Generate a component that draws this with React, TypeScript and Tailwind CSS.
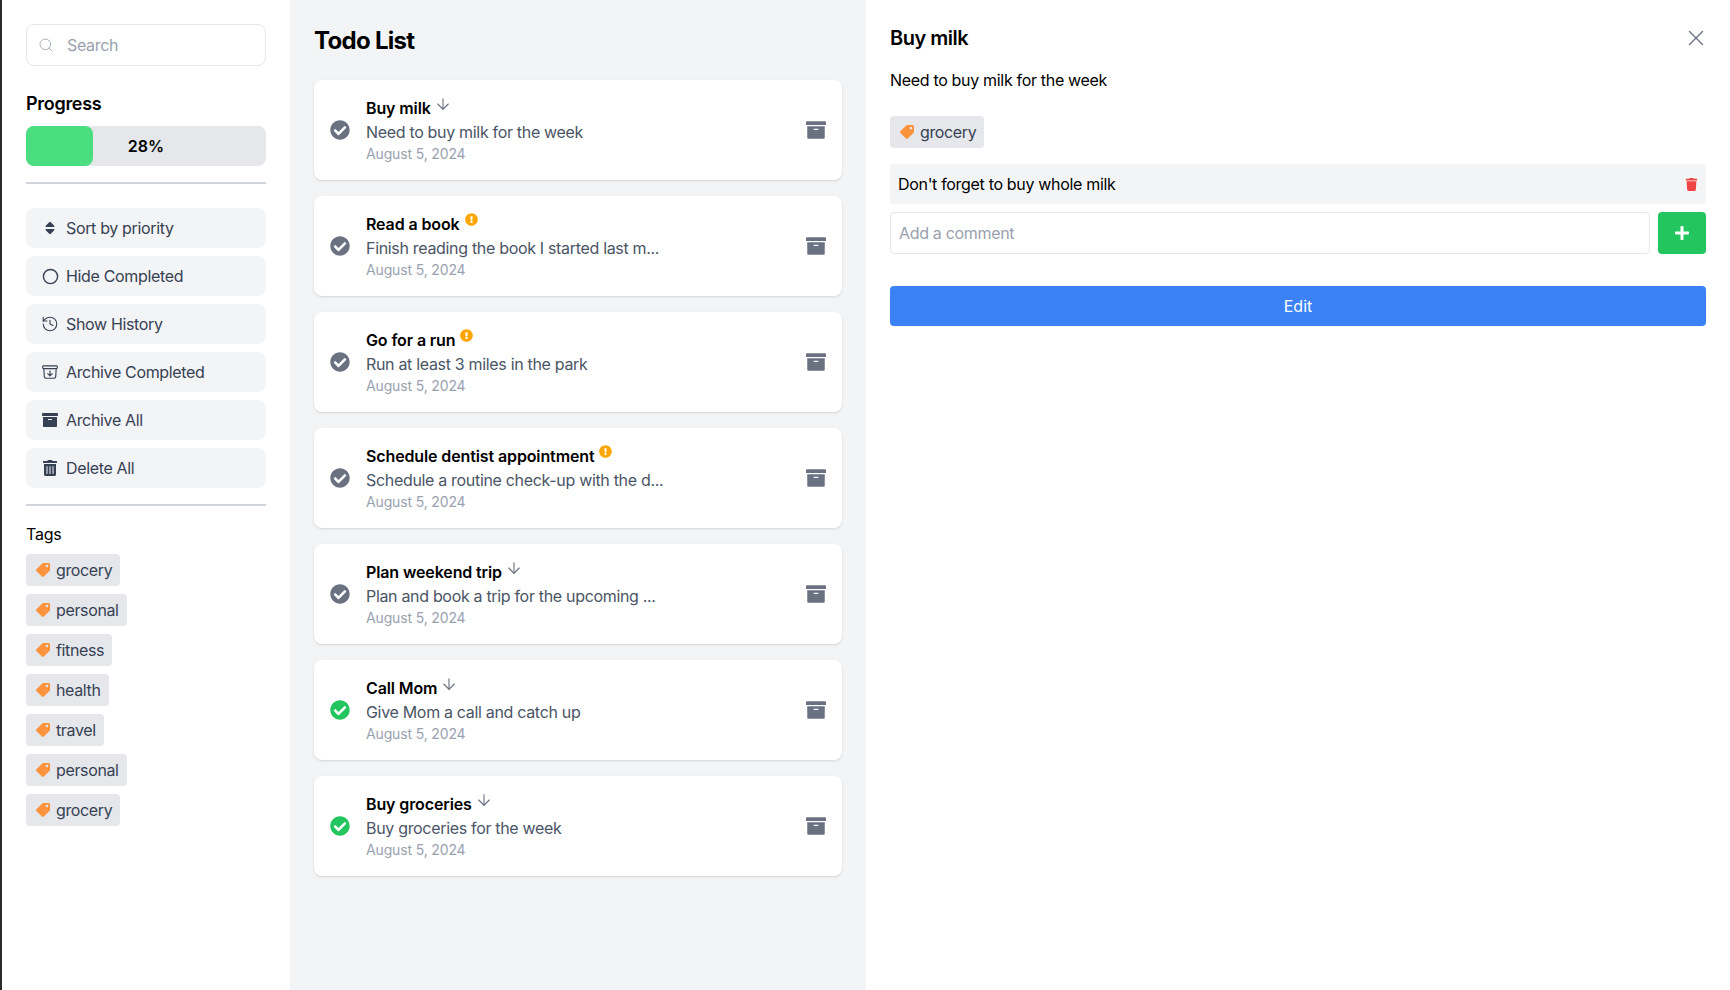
import React from 'react';
import { ArrowDown, Circle, History, Search, X } from 'lucide-react';
import { FaArchive, FaCheckCircle, FaExclamationCircle, FaPlus, FaSort, FaTag, FaTrash, FaTrashAlt } from 'react-icons/fa';
import { HiOutlineArchiveBoxArrowDown } from 'react-icons/hi2';

const tags = ['grocery', 'personal', 'fitness', 'health', 'travel', 'personal', 'grocery'];

const todos = [
  { title: 'Buy milk', desc: 'Need to buy milk for the week', flag: 'low', done: false },
  { title: 'Read a book', desc: 'Finish reading the book I started last m...', flag: 'high', done: false },
  { title: 'Go for a run', desc: 'Run at least 3 miles in the park', flag: 'high', done: false },
  { title: 'Schedule dentist appointment', desc: 'Schedule a routine check-up with the d...', flag: 'high', done: false },
  { title: 'Plan weekend trip', desc: 'Plan and book a trip for the upcoming ...', flag: 'low', done: false },
  { title: 'Call Mom', desc: 'Give Mom a call and catch up', flag: 'low', done: true },
  { title: 'Buy groceries', desc: 'Buy groceries for the week', flag: 'low', done: true },
];

function TagChip({ name }: { name: string }) {
  return (
    <div className="flex h-8 w-fit items-center rounded bg-gray-200 pl-2.5 pr-2 tracking-[-0.36px] text-gray-700">
      <FaTag size={14} className="mr-1.5 -scale-x-100 text-[#fb923c]" />
      <span>{name}</span>
    </div>
  );
}

function SideButton({ icon, label }: { icon: React.ReactNode; label: string }) {
  return (
    <button className="flex h-10 w-full items-center rounded-lg bg-gray-100 tracking-[-0.34px] text-gray-700">
      <span className="flex w-10 justify-center pl-2">{icon}</span>
      <span>{label}</span>
    </button>
  );
}

function TodoCard({ title, desc, flag, done }: { title: string; desc: string; flag: string; done: boolean }) {
  return (
    <div className="flex h-[100px] items-center rounded-lg bg-white px-4 shadow">
      <FaCheckCircle size={20} className={done ? 'text-[#22c55e]' : 'text-gray-500'} />
      <div className="ml-[16px] flex-1">
        <div className="flex h-6 items-center font-semibold tracking-[-0.12px] text-black">
          <span>{title}</span>
          {flag === 'low' ? (
            <ArrowDown size={18} strokeWidth={1.5} className="relative top-[-4px] ml-[3px] text-gray-500" />
          ) : (
            <FaExclamationCircle size={13} className="relative top-[-5px] ml-[5px] text-[#ffa500]" />
          )}
        </div>
        <div className="leading-6 tracking-[-0.32px] text-gray-600">{desc}</div>
        <div className="text-sm leading-5 tracking-[-0.15px] text-gray-400">August 5, 2024</div>
      </div>
      <FaArchive size={20} className="text-gray-500" />
    </div>
  );
}

export default function App() {
  return (
    <div className="flex h-screen overflow-hidden bg-white text-black [font-family:Inter,'Liberation_Sans',sans-serif]">
      <div className="w-[2px] bg-[#2b2b2b]" />

      <aside className="w-72 p-6">
        <div className="flex h-[42px] items-center rounded-lg border border-gray-200 bg-white">
          <Search size={16} strokeWidth={1.25} className="ml-[11px] text-gray-400" />
          <span className="ml-[13px] tracking-[-0.32px] text-gray-400">Search</span>
        </div>

        <h2 className="mt-[24px] text-lg font-semibold leading-7 tracking-[-0.3px]">Progress</h2>
        <div className="relative mt-2 h-10 rounded-lg bg-gray-200">
          <div className="h-10 w-[28%] rounded-lg bg-[#4ade80]" />
          <div className="absolute inset-0 flex items-center justify-center font-semibold">28%</div>
        </div>
        <div className="mt-4 border-t-2 border-gray-300" />

        <div className="mt-6 space-y-2">
          <SideButton icon={<FaSort size={16} />} label="Sort by priority" />
          <SideButton icon={<Circle size={17} strokeWidth={2} />} label="Hide Completed" />
          <SideButton icon={<History size={18} strokeWidth={1.5} />} label="Show History" />
          <SideButton icon={<HiOutlineArchiveBoxArrowDown size={18} />} label="Archive Completed" />
          <SideButton icon={<FaArchive size={16} />} label="Archive All" />
          <SideButton icon={<FaTrashAlt size={16} />} label="Delete All" />
        </div>
        <div className="mt-4 border-t-2 border-gray-300" />

        <h3 className="mt-4 leading-6 tracking-[-0.2px]">Tags</h3>
        <div className="mt-2 space-y-2">
          {tags.map((t, i) => (
            <TagChip key={i} name={t} />
          ))}
        </div>
      </aside>

      <main className="w-[576px] bg-gray-100 px-6 pt-[25px]">
        <h1 className="text-2xl font-bold leading-8 tracking-[-0.7px]">Todo List</h1>
        <div className="mt-[23px] space-y-4">
          {todos.map((t) => (
            <TodoCard key={t.title} {...t} />
          ))}
        </div>
      </main>

      <section className="flex-1 px-6 pt-6">
        <div className="flex h-7 items-center justify-between">
          <h2 className="text-xl font-semibold tracking-[-0.5px]">Buy milk</h2>
          <X size={26} strokeWidth={1.25} className="-mr-[3px] text-gray-500" />
        </div>
        <p className="mt-[16px] leading-6 tracking-[-0.32px]">Need to buy milk for the week</p>
        <div className="mt-6">
          <TagChip name="grocery" />
        </div>
        <div className="mt-4 flex h-10 items-center justify-between rounded bg-gray-100 px-2 tracking-[-0.32px]">
          <span>Don't forget to buy whole milk</span>
          <FaTrash size={13} className="text-[#ef4444]" />
        </div>
        <div className="mt-2 flex h-[42px] gap-2">
          <div className="flex flex-1 items-center rounded border border-gray-200 pl-2 tracking-[-0.32px] text-gray-400">Add a comment</div>
          <button className="flex w-12 items-center justify-center rounded bg-[#22c55e] text-white">
            <FaPlus size={16} />
          </button>
        </div>
        <button className="mt-8 h-10 w-full rounded bg-[#3b82f6] text-white">Edit</button>
      </section>
    </div>
  );
}
